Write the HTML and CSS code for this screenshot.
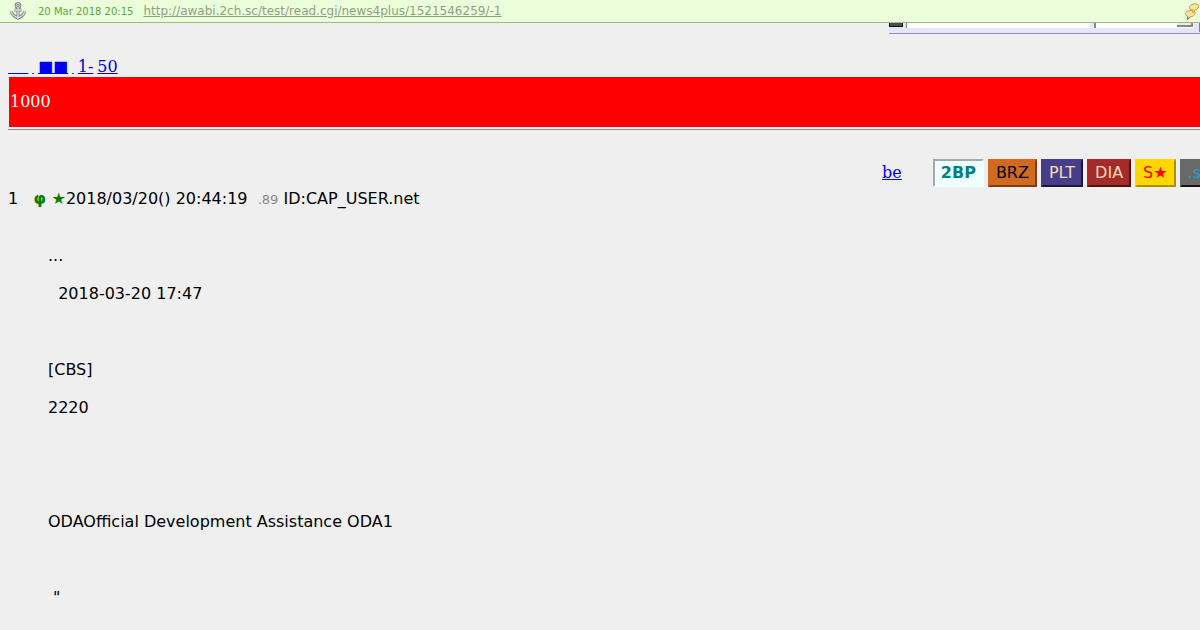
FILE: index.html
```
<!DOCTYPE html>
<html lang="ja">
<head>
<meta charset="utf-8">
<title>1521546259</title>
<link rel="stylesheet" href="styles.css">
</head>
<body>
<header class="archive-bar">
  <svg class="anchor" width="16" height="18" viewBox="0 0 16 18" fill="none" aria-hidden="true">
    <path d="M8 5.500V15M4.500 8h7M1.500 9.500c.3 3.500 3 5 6.500 6.500 3.500-1.500 6.200-3 6.500-6.500" stroke="#777" stroke-width="3"/>
    <circle cx="8" cy="3.500" r="2" stroke="#777" stroke-width="2.600"/>
    <path d="M8 5.500V15M4.500 8h7M1.500 9.500c.3 3.500 3 5 6.500 6.500 3.500-1.500 6.200-3 6.500-6.500" stroke="#ddd" stroke-width="1.500"/>
    <circle cx="8" cy="3.500" r="2" stroke="#ddd" stroke-width="1"/>
  </svg>
  <time class="stamp">20 Mar 2018 20:15</time>
  <a class="source" href="#">http://awabi.2ch.sc/test/read.cgi/news4plus/1521546259/-1</a>
  <svg class="bubbles" width="16" height="18" viewBox="0 0 16 18" aria-hidden="true">
    <g fill="#fbe3a0" stroke="#c99a3c">
      <path d="M9.500 2c3-.8 5 .3 5 2.500s-2 3.500-4.500 3.700S5.500 7.500 5.500 5.500s1.500-3 4-3.500Z"/>
      <path d="M6.500 8.500c3-.3 4.500.8 4.500 2.700S9 14.600 6.500 14.800L3.500 17.300l.2-3C2.300 13.700 1.500 12.900 1.500 11.800c0-2 2-3.100 5-3.300Z"/>
      <path d="m8.500 8.200.5 2.600 2-2.800" fill="#fbe3a0"/>
    </g>
    <path d="m3.500 14.500.2 2.800 2.300-2" fill="none" stroke="#a66a2c"/>
  </svg>
</header>
<div class="search-panel">
  <span class="logo"></span>
  <input class="query" type="text" aria-label="検索">
  <span class="choice"><i class="arrow"></i></span>
  <span class="go"></span>
</div>
<main class="thread">
  <nav class="pager"><a href="#">&nbsp;&nbsp;&nbsp;&nbsp;</a> <a href="#">&#8202;</a> <a href="#">■■</a> <a href="#">&#8202;</a> <a href="#">1-</a> <a href="#">50</a></nav>
  <div class="notice">1000</div>
  <hr class="rule">
  <div class="points">
    <a class="be" href="#">be</a>
    <span class="badge bp">2BP</span>
    <span class="badge brz">BRZ</span>
    <span class="badge plt">PLT</span>
    <span class="badge dia">DIA</span>
    <span class="badge star">S★</span>
    <span class="badge sc">.s</span>
  </div>
  <article>
    <div class="post-head">1 &nbsp; <b class="name">φ ★</b>2018/03/20() 20:44:19 &nbsp;<small class="addr">.89</small> ID:CAP_USER.net</div>
    <div class="post-body">

...

  2018-03-20 17:47



[CBS]

2220





ODAOfficial Development Assistance ODA1



 "
</div>
  </article>
</main>
</body>
</html>
```
FILE: styles.css
```
body {
  margin: 0;
  background: #efefef;
  color: #000;
  font: 16px/19px "DejaVu Sans", sans-serif;
  overflow: hidden;
}

.archive-bar {
  display: flex;
  align-items: center;
  height: 22px;
  padding-left: 10px;
  border-bottom: 1px solid #9db88c;
  background: #ebffdb;
}

.stamp {
  margin: 0 10px 0 12px;
  color: #5ca63a;
  font-size: 10px;
}

.source {
  color: #8f9f85;
  font-size: 12px;
}

.bubbles {
  margin-left: auto;
}

.search-panel {
  display: flex;
  box-sizing: border-box;
  width: 311px;
  height: 11px;
  margin-left: auto;
  padding-bottom: 5px;
  border-bottom: 1px solid #98b;
  background: #e6e6fa;
}

.logo {
  width: 12px;
  height: 3px;
  margin: 0 3px 0 0;
  border: 1px solid #111;
  border-top: 0;
  background: #465046;
}

.query {
  flex: 1;
  min-width: 0;
  height: 5px;
  padding: 0;
  border: 0;
  border-left: 1px solid #888;
  background: #fff;
}

.choice {
  display: flex;
  justify-content: flex-end;
  width: 98px;
  height: 5px;
  margin-left: 4px;
  border-left: 2px solid #888;
  background: #fff;
}

.arrow {
  width: 14px;
  height: 2px;
  margin: 0 1px;
  border: solid #888;
  border-width: 0 2px 2px 0;
  background: #efebe7;
}

.go {
  width: 1px;
  height: 9px;
  margin-left: 5px;
  background: #58c;
}

.thread {
  padding: 23px 0 0 8px;
}

.pager,
.notice,
.be {
  font-family: "DejaVu Serif", serif;
}

.pager {
  display: flex;
  gap: 4px;
}

.pager a,
.be {
  color: #00e;
}

.notice {
  margin: 1px 0 0 1px;
  padding: 15px 1px 16px;
  background: #f00;
  color: #fff;
}

.rule {
  margin: 2px 0 0;
  border: 0;
  border-top: 1px solid #988;
}

.points {
  display: flex;
  justify-content: flex-end;
  align-items: center;
  gap: 4px;
  margin-top: 29px;
  overflow: hidden;
}

.be {
  margin: 0 27px 2px 0;
}

.badge {
  flex: none;
  padding: 2px 6px 3px;
  border: 2px outset;
}

.bp {
  border: 2px inset #f0ffff;
  background: #f0ffff;
  color: #008080;
  font-weight: bold;
}

.brz {
  border-color: #d2691e;
  background: #d2691e;
}

.plt {
  border-color: #483d8b;
  background: #483d8b;
  color: #f0e0b0;
}

.dia {
  border-color: #a52a2a;
  background: #a52a2a;
  color: #f5deb3;
}

.star {
  border-color: #ffd700;
  background: #ffd700;
  color: #f00;
}

.sc {
  margin-right: -9px;
  border-color: #696969;
  background: #696969;
  color: #1e9fd8;
}

.post-head {
  margin-top: 2px;
}

.name {
  color: #008000;
}

.addr {
  color: #888;
  font-size: 13px;
  line-height: 1;
}

.post-body {
  margin-left: 40px;
  white-space: pre-wrap;
}
```
